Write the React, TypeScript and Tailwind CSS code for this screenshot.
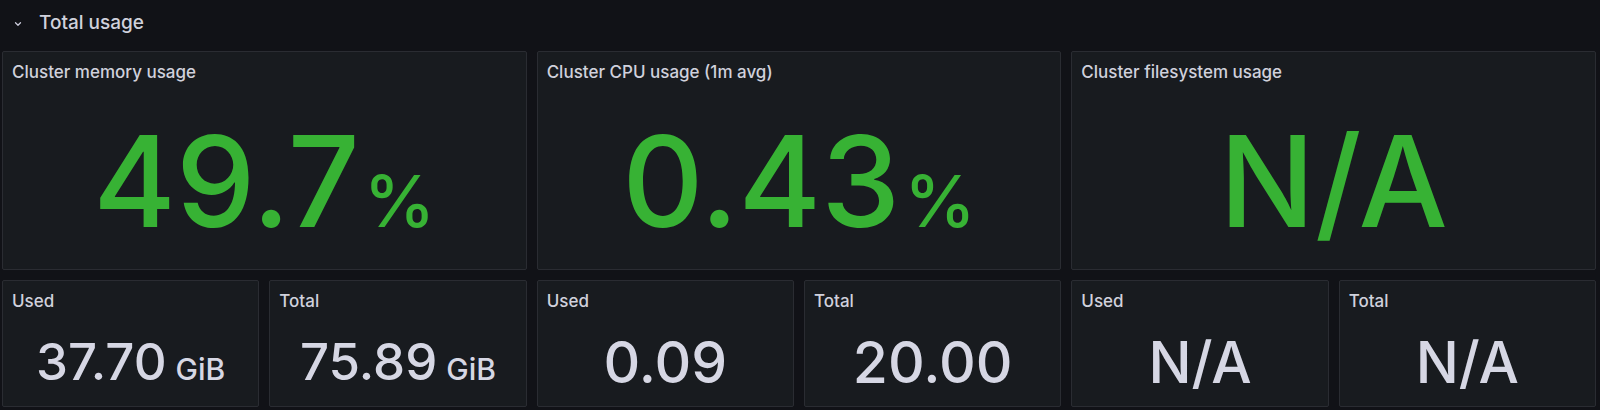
import React from 'react';

type StatProps = {
  title: string;
  value: string;
  unit?: string;
  big?: boolean;
};

const StatPanel: React.FC<StatProps> = ({ title, value, unit, big }) => {
  return (
    <div className="flex flex-col h-full bg-[#181b1f] border border-[#2a2c32] rounded-[2px] overflow-hidden">
      <div className="px-[9px] pt-[10px] text-[17px] leading-[20px] font-medium text-[#d0d1dc] whitespace-nowrap">
        {title}
      </div>
      {big ? (
        <div className="flex-1 flex items-baseline justify-center pt-[36px]">
          <span className="text-[126px] leading-none font-medium text-[#37b234]">{value}</span>
          {unit && <span className="ml-[4px] text-[72px] leading-none font-medium text-[#37b234]">{unit}</span>}
        </div>
      ) : unit ? (
        <div className="flex-1 flex items-baseline justify-center pt-[25px]">
          <span className="text-[51px] leading-none font-medium text-[#d6d7e4]">{value}</span>
          <span className="ml-[9px] text-[30px] leading-none font-medium text-[#d6d7e4]">{unit}</span>
        </div>
      ) : (
        <div className="flex-1 flex items-baseline justify-center pt-[23px]">
          <span className="text-[57px] leading-none font-medium text-[#d6d7e4]">{value}</span>
        </div>
      )}
    </div>
  );
};

const App: React.FC = () => {
  return (
    <div className="w-[1600px] h-[410px] bg-[#111217] overflow-hidden" style={{ fontFamily: 'Inter, "Noto Sans", sans-serif' }}>
      <div className="h-[51px] flex items-start pt-[11px] pl-[13px]">
        <svg width="10" height="10" viewBox="0 0 24 24" className="mt-[8px] text-[#ccccdc]" fill="none" stroke="currentColor" strokeWidth="3" strokeLinecap="round" strokeLinejoin="round">
          <path d="M6 9l6 6 6-6" />
        </svg>
        <span className="ml-[16px] text-[19px] leading-[24px] font-medium text-[#d0d1dc]">Total usage</span>
      </div>
      <div className="pl-[2px] pr-[4px]">
        <div className="grid grid-cols-3 gap-x-[10px] h-[219px]">
          <StatPanel title="Cluster memory usage" value="49.7" unit="%" big />
          <StatPanel title="Cluster CPU usage (1m avg)" value="0.43" unit="%" big />
          <StatPanel title="Cluster filesystem usage" value="N/A" big />
        </div>
        <div className="grid grid-cols-6 gap-x-[10px] h-[127px] mt-[10px]">
          <StatPanel title="Used" value="37.70" unit="GiB" />
          <StatPanel title="Total" value="75.89" unit="GiB" />
          <StatPanel title="Used" value="0.09" />
          <StatPanel title="Total" value="20.00" />
          <StatPanel title="Used" value="N/A" />
          <StatPanel title="Total" value="N/A" />
        </div>
      </div>
    </div>
  );
};

export default App;
